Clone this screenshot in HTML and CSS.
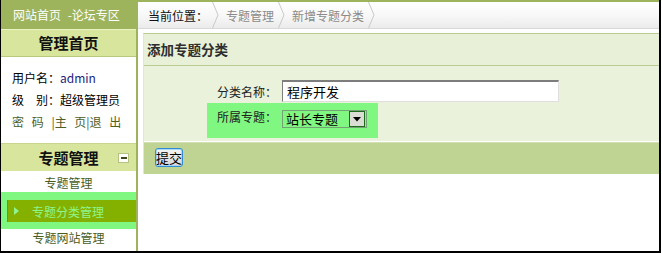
FILE: index.html
```html
<!DOCTYPE html>
<html lang="zh">
<head>
<meta charset="utf-8">
<title>添加专题分类</title>
<link rel="stylesheet" href="styles.css">
</head>
<body>
<div class="frame">
  <aside class="sidebar">
    <div class="brand">网站首页 -论坛专区</div>
    <div class="side-body">
      <div class="side-head">管理首页</div>
      <div class="user-info">
        <p>用户名：<span class="uname">admin</span></p>
        <p>级　别：超级管理员</p>
        <p class="links"><a href="#">密 码</a> |<a href="#">主 页</a>|<a href="#">退 出</a></p>
      </div>
      <div class="side-head section"><span></span><span class="section-title">专题管理</span><span class="toggle"><span class="dash"></span></span></div>
      <ul class="menu">
        <li class="item first">专题管理</li>
        <li class="item active"><span class="active-inner"><span class="arrow"></span>专题分类管理</span></li>
        <li class="item last">专题网站管理</li>
      </ul>
    </div>
  </aside>
  <main class="main">
    <nav class="crumbs">
      <span class="crumb-here">当前位置：</span>
      <svg class="chev" width="7" height="26" viewBox="0 0 7 26"><polyline points="0.5,0 6,13 0.5,26" fill="none" stroke="#c9c9c9" stroke-width="1"/></svg>
      <span class="crumb">专题管理</span>
      <svg class="chev" width="7" height="26" viewBox="0 0 7 26"><polyline points="0.5,0 6,13 0.5,26" fill="none" stroke="#c9c9c9" stroke-width="1"/></svg>
      <span class="crumb">新增专题分类</span>
      <svg class="chev" width="7" height="26" viewBox="0 0 7 26"><polyline points="0.5,0 6,13 0.5,26" fill="none" stroke="#c9c9c9" stroke-width="1"/></svg>
    </nav>
    <section class="panel">
      <h2 class="panel-title">添加专题分类</h2>
      <div class="form">
        <div class="row">
          <label class="label">分类名称：</label>
          <input class="text-input" type="text" value="程序开发">
        </div>
        <div class="row hl">
          <label class="label">所属专题：</label>
          <div class="select"><span class="sel-text">站长专题</span><span class="sel-btn"><svg width="8" height="5" viewBox="0 0 8 5"><polygon points="0,0 8,0 4,4.5" fill="#000"/></svg></span></div>
        </div>
      </div>
      <div class="bar"><button class="btn" type="button">提交</button></div>
    </section>
  </main>
</div>
</body>
</html>
```
FILE: styles.css
```css
html, body {
  margin: 0;
  padding: 0;
  background: #fff;
}
body {
  font-family: "Noto Sans CJK SC", "Noto Sans", "Liberation Sans", sans-serif;
  font-size: 12px;
  color: #000;
}
.frame {
  display: flex;
  width: 661px;
  height: 253px;
  box-sizing: border-box;
  border-left: 1px solid #000;
  border-right: 2px solid #000;
  border-bottom: 2px solid #000;
  overflow: hidden;
}

/* sidebar */
.sidebar {
  width: 137px;
  flex: none;
  display: flex;
  flex-direction: column;
}
.brand {
  height: 29px;
  line-height: 29px;
  background: #9db45c;
  color: #fff;
  padding-left: 12px;
  white-space: nowrap;
  word-spacing: 4px;
}
.side-body {
  flex: 1;
  border-right: 2px solid #9db45c;
}
.side-head {
  height: 26px;
  line-height: 26px;
  background: #d8e59d;
  border-top: 1px solid #eaf2c4;
  border-bottom: 1px solid #b8c97e;
  text-align: center;
  font-weight: bold;
  font-size: 15px;
  color: #111;
}
.user-info {
  padding: 10px 0 10px 11px;
  height: 66px;
}
.user-info p {
  margin: 0;
  height: 22px;
  line-height: 22px;
  white-space: nowrap;
}
.uname {
  color: #22227a;
}
.links, .links a {
  color: #4d5e1e;
  text-decoration: none;
  word-spacing: 5px;
}
.side-head.section {
  height: 27px;
  line-height: 27px;
  border-top: 1px solid #c7d58d;
  border-bottom: none;
  display: grid;
  grid-template-columns: 1fr auto 1fr;
  align-items: center;
}
.toggle {
  justify-self: end;
  margin-right: 7px;
  width: 9px;
  height: 8px;
  background: #fff;
  border: 1px solid #b3c382;
  display: flex;
  align-items: center;
  justify-content: center;
}
.dash {
  width: 6px;
  height: 2px;
  background: #3d4a1a;
}
.menu {
  list-style: none;
  margin: 0;
  padding: 0;
}
.item {
  text-align: center;
  color: #4a5c1c;
  white-space: nowrap;
}
.item.first {
  height: 21px;
  line-height: 23px;
}
.item.active {
  background: #80f780;
  padding: 8px 0 7px 6px;
  text-align: left;
}
.active-inner {
  display: flex;
  align-items: center;
  height: 22px;
  background: #84b100;
  border-left: 1px solid #739b00;
  color: #8ef58e;
}
.arrow {
  width: 0;
  height: 0;
  border-top: 4px solid transparent;
  border-bottom: 4px solid transparent;
  border-left: 5px solid #8ef58e;
  margin: 0 13px 0 6px;
}
.item.last {
  height: 18px;
  line-height: 18px;
}

/* main */
.main {
  flex: 1;
  min-width: 0;
  display: flex;
  flex-direction: column;
}
.crumbs {
  height: 26px;
  border-top: 2px solid #9db45c;
  border-bottom: 1px solid #d9d9d9;
  background: linear-gradient(#ffffff, #f7f7f7 55%, #ebebeb);
  display: flex;
  align-items: center;
  padding-left: 10px;
  white-space: nowrap;
}
.crumb-here {
  color: #111;
}
.chev {
  display: block;
  margin: 0 7px 0 4px;
}
.crumb {
  color: #8a8a8a;
}
.panel {
  margin: 4px 0 0 5px;
  border-top: 1px solid #b8cd8e;
  border-left: 1px solid #dfe9cc;
}
.panel-title {
  margin: 0;
  height: 31px;
  line-height: 31px;
  padding-left: 3px;
  font-size: 13.5px;
  font-weight: bold;
  color: #2e2e2e;
  background: #e8f1d7;
  border-bottom: 1px solid #b9cc92;
}
.form {
  background: #eaf2db;
  padding: 14px 0 3px 0;
  border-bottom: 1px solid #fdfefb;
}
.row {
  display: flex;
  align-items: center;
  height: 22px;
  padding-left: 73px;
}
.label {
  width: 65px;
  flex: none;
  color: #222;
}
.text-input {
  width: 277px;
  height: 22px;
  box-sizing: border-box;
  margin: 0;
  padding: 0 4px;
  border: 1px solid;
  border-color: #7d7d7d #dedede #dedede #7d7d7d;
  border-top-width: 2px;
  background: #fff;
  font-family: inherit;
  font-size: 13px;
  color: #000;
  outline: none;
}
.row.hl {
  margin: 1px 0 0 63px;
  width: 161px;
  height: 35px;
  padding-left: 10px;
  background: #80f780;
  align-items: flex-start;
}
.row.hl .label {
  line-height: 28px;
}
.select {
  margin-top: 7px;
  width: 85px;
  height: 18px;
  box-sizing: border-box;
  border: 1px solid #76a076;
  display: flex;
  align-items: center;
  justify-content: space-between;
  font-size: 13px;
  padding-left: 3px;
}
.sel-text {
  line-height: 16px;
}
.sel-btn {
  width: 16px;
  height: 16px;
  box-sizing: border-box;
  border: 1px solid #1c6a1c;
  background: #d9ddd3;
  display: flex;
  align-items: center;
  justify-content: center;
  margin-right: 1px;
}
.sel-btn svg {
  display: block;
}
.bar {
  height: 31px;
  background: #bfd392;
  border-top: 1px solid #d2e0b4;
  padding-left: 11px;
  display: flex;
  align-items: flex-start;
}
.btn {
  margin-top: 5px;
  width: 28px;
  height: 19px;
  padding: 0;
  border: 1px solid #2f8bd4;
  border-radius: 3px;
  background: linear-gradient(#f5f5f5, #d7d7d7);
  box-shadow: inset 0 0 0 1px #a9d7f6;
  font-family: inherit;
  font-size: 13px;
  line-height: 17px;
  color: #000;
}
```
